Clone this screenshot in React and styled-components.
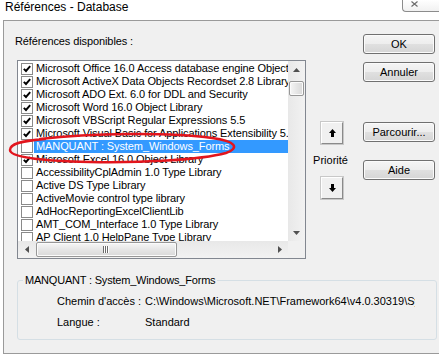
import React from "react";
import styled, { createGlobalStyle } from "styled-components";

const FONT = `"Liberation Sans", Arial, sans-serif`;

const GlobalStyle = createGlobalStyle`
  html, body { margin: 0; padding: 0; background: #fff; }
  body { font-family: ${FONT}; }
`;

const Window = styled.div`
  position: relative;
  width: 439px;
  height: 356px;
  overflow: hidden;
  background: #fff;
  font-family: ${FONT};
  font-size: 11px;
  color: #000;
`;

const TitleBar = styled.div`
  display: flex;
  justify-content: space-between;
  align-items: flex-start;
  height: 20px;
`;

const Title = styled.div`
  padding-left: 5px;
  font-size: 12px;
  line-height: 15px;
`;

const CloseButton = styled.div`
  box-sizing: border-box;
  width: 37px;
  height: 12px;
  border: 1px solid #8c8c8c;
  border-top: none;
  border-right: none;
  border-radius: 0 0 0 4px;
  background: linear-gradient(#ffffff, #f1f1f1);
  display: flex;
  align-items: flex-start;
  padding: 1px 0 0 8px;
`;

const DialogBody = styled.div`
  box-sizing: border-box;
  margin-left: 3px;
  width: 450px;
  height: 334px;
  border: 1px solid #9a9a9a;
  border-right: none;
  background: #f0f0f0;
  display: flex;
  flex-direction: column;
`;

const TopArea = styled.div`
  display: flex;
  align-items: flex-start;
  padding-top: 13px;
`;

const LeftColumn = styled.div`
  display: flex;
  flex-direction: column;
  margin-left: 11px;
`;

const FieldLabel = styled.div`
  line-height: 13px;
  margin: 1px 0 12px;
  letter-spacing: -0.1px;
`;

const ListBox = styled.div`
  box-sizing: border-box;
  margin-left: 2px;
  width: 289px;
  height: 199px;
  border: 1px solid #828790;
  background: #fff;
  display: grid;
  grid-template-columns: 270px 17px;
  grid-template-rows: 180px 17px;
`;

const Rows = styled.div`
  overflow: hidden;
  padding-top: 1px;
`;

const Row = styled.div`
  display: flex;
  align-items: center;
  height: 13px;
`;

const CheckBox = styled.div`
  box-sizing: border-box;
  flex: none;
  width: 12px;
  height: 12px;
  margin-left: 3px;
  border: 1px solid #8a8a8a;
  background: #fff;
  display: flex;
  align-items: center;
  justify-content: center;
`;

const ItemText = styled.div`
  flex: 1;
  min-width: 0;
  margin-left: 1px;
  padding: 0 2px;
  line-height: 13px;
  letter-spacing: -0.1px;
  white-space: nowrap;
  overflow: hidden;
  background: ${(p) => (p.$selected ? "#3399ff" : "transparent")};
  color: ${(p) => (p.$selected ? "#fff" : "#000")};
`;

const VScroll = styled.div`
  display: flex;
  flex-direction: column;
  background: linear-gradient(to right, #e8e8e8, #f2f2f2);
`;

const HScroll = styled.div`
  display: flex;
  align-items: center;
  background: linear-gradient(#e8e8e8, #f2f2f2);
`;

const Corner = styled.div`
  background: #f0f0f0;
`;

const ScrollArrow = styled.div`
  flex: none;
  width: 17px;
  height: 17px;
  display: flex;
  align-items: center;
  justify-content: center;
  margin-${(p) => p.$push || "none"}: auto;
`;

const Thumb = styled.div`
  box-sizing: border-box;
  flex: none;
  border: 1px solid #979797;
  border-radius: 2px;
  display: flex;
  align-items: center;
  justify-content: center;
  background: ${(p) =>
    p.$vertical
      ? "linear-gradient(to right, #f6f6f6, #e6e6e6 50%, #d9d9d9)"
      : "linear-gradient(#f6f6f6, #e6e6e6 50%, #d9d9d9)"};
  box-shadow: inset 0 0 0 1px #fbfbfb;
  ${(p) =>
    p.$vertical
      ? "width: 15px; height: 15px; margin: 3px 0 0 1px;"
      : "width: 141px; height: 15px; margin-left: 1px;"}
`;

const MidColumn = styled.div`
  display: flex;
  flex-direction: column;
  align-items: center;
  width: 42px;
  margin-left: 5px;
  padding-top: 88px;
`;

const ArrowButton = styled.div`
  box-sizing: border-box;
  width: 22px;
  height: 22px;
  border: 1px solid;
  border-color: #ffffff #8a8a8a #8a8a8a #ffffff;
  box-shadow: 0 0 0 1px #c8c8c8;
  background: #f0f0f0;
  display: flex;
  align-items: center;
  justify-content: center;
`;

const PriorityLabel = styled.div`
  line-height: 13px;
  margin: 10px 3px 10px 0;
`;

const RightColumn = styled.div`
  display: flex;
  flex-direction: column;
  margin-left: 10px;
  width: 72px;
`;

const Button = styled.div`
  box-sizing: border-box;
  height: 20px;
  margin-top: ${(p) => p.$gap || 0}px;
  border: 1px solid #707070;
  border-radius: 3px;
  background: linear-gradient(#f5f5f5 0%, #ededed 50%, #e0e0e0 51%, #d5d5d5 100%);
  box-shadow: inset 0 0 0 1px #fbfbfb;
  display: flex;
  align-items: center;
  justify-content: center;
  line-height: 13px;
`;

const GroupBox = styled.fieldset`
  box-sizing: border-box;
  width: 420px;
  min-width: 0;
  margin: 15px 0 0 13px;
  padding: 0;
  border: 1px solid #d5dfe5;
  border-radius: 3px;
`;

const Legend = styled.legend`
  margin-left: 5px;
  padding: 0 2px;
  line-height: 13px;
  letter-spacing: -0.2px;
`;

const InfoBlock = styled.div`
  display: flex;
  flex-direction: column;
  gap: 8px;
  padding: 8px 0 10px 39px;
`;

const InfoRow = styled.div`
  display: flex;
  line-height: 13px;
`;

const InfoLabel = styled.div`
  width: 88px;
  flex: none;
`;

const InfoValue = styled.div`
  width: 270px;
  white-space: nowrap;
  overflow: hidden;
`;

const Annotation = styled.svg`
  position: absolute;
  left: 0;
  top: 0;
  pointer-events: none;
`;

const items = [
  ["Microsoft Office 16.0 Access database engine Object Library", true],
  ["Microsoft ActiveX Data Objects Recordset 2.8 Library", true],
  ["Microsoft ADO Ext. 6.0 for DDL and Security", true],
  ["Microsoft Word 16.0 Object Library", true],
  ["Microsoft VBScript Regular Expressions 5.5", true],
  ["Microsoft Visual Basic for Applications Extensibility 5.3", true],
  ["MANQUANT : System_Windows_Forms", false, true],
  ["Microsoft Excel 16.0 Object Library", true],
  ["AccessibilityCplAdmin 1.0 Type Library", false],
  ["Active DS Type Library", false],
  ["ActiveMovie control type library", false],
  ["AdHocReportingExcelClientLib", false],
  ["AMT_COM_Interface 1.0 Type Library", false],
  ["AP Client 1.0 HelpPane Type Library", false],
];

const Check = () => (
  <svg width="8" height="8" viewBox="0 0 8 8">
    <path d="M0.8 3.8 L3 6 L7.2 1.2" fill="none" stroke="#000" strokeWidth="1.9" />
  </svg>
);

const Tri = ({ dir }) => {
  const pts = {
    up: "0,4 3.5,0 7,4",
    down: "0,0 7,0 3.5,4",
    left: "4,0 4,7 0,3.5",
    right: "0,0 4,3.5 0,7",
  }[dir];
  const horiz = dir === "left" || dir === "right";
  return (
    <svg width={horiz ? 4 : 7} height={horiz ? 7 : 4} viewBox={horiz ? "0 0 4 7" : "0 0 7 4"}>
      <polygon points={pts} fill="#505050" />
    </svg>
  );
};

const Grip = () => (
  <svg width="7" height="7" viewBox="0 0 7 7">
    {[0, 2, 4].map((i) => (
      <g key={i}>
        <rect x={i} y="0" width="1" height="7" fill="#6b6b6b" />
        <rect x={i + 1} y="0" width="1" height="7" fill="#fff" />
      </g>
    ))}
  </svg>
);

const BigArrow = ({ down }) => (
  <svg width="7" height="8" viewBox="0 0 7 8" style={down ? { transform: "rotate(180deg)" } : undefined}>
    <path d="M3.5 0 L7 4 L5 4 L5 8 L2 8 L2 4 L0 4 Z" fill="#000" />
  </svg>
);

export default function App() {
  return (
    <Window>
      <GlobalStyle />
      <TitleBar>
        <Title>Références - Database</Title>
        <CloseButton>
          <svg width="7" height="6" viewBox="0 0 7 6">
            <path d="M0.5 0.5 L6.5 5.5 M6.5 0.5 L0.5 5.5" stroke="#6a6a6a" strokeWidth="1.1" fill="none" />
          </svg>
        </CloseButton>
      </TitleBar>
      <DialogBody>
        <TopArea>
          <LeftColumn>
            <FieldLabel>Références disponibles :</FieldLabel>
            <ListBox>
              <Rows>
                {items.map(([name, checked, selected]) => (
                  <Row key={name}>
                    <CheckBox>{checked && <Check />}</CheckBox>
                    <ItemText $selected={selected}>{name}</ItemText>
                  </Row>
                ))}
              </Rows>
              <VScroll>
                <ScrollArrow><Tri dir="up" /></ScrollArrow>
                <Thumb $vertical />
                <ScrollArrow $push="top"><Tri dir="down" /></ScrollArrow>
              </VScroll>
              <HScroll>
                <ScrollArrow><Tri dir="left" /></ScrollArrow>
                <Thumb><Grip /></Thumb>
                <ScrollArrow $push="left"><Tri dir="right" /></ScrollArrow>
              </HScroll>
              <Corner />
            </ListBox>
          </LeftColumn>
          <MidColumn>
            <ArrowButton><BigArrow /></ArrowButton>
            <PriorityLabel>Priorité</PriorityLabel>
            <ArrowButton><BigArrow down /></ArrowButton>
          </MidColumn>
          <RightColumn>
            <Button>OK</Button>
            <Button $gap={8}>Annuler</Button>
            <Button $gap={40}>Parcourir...</Button>
            <Button $gap={18}>Aide</Button>
          </RightColumn>
        </TopArea>
        <GroupBox>
          <Legend>MANQUANT : System_Windows_Forms</Legend>
          <InfoBlock>
            <InfoRow>
              <InfoLabel>Chemin d'accès :</InfoLabel>
              <InfoValue>C:\Windows\Microsoft.NET\Framework64\v4.0.30319\System.Windows.Forms.tlb</InfoValue>
            </InfoRow>
            <InfoRow>
              <InfoLabel>Langue :</InfoLabel>
              <InfoValue>Standard</InfoValue>
            </InfoRow>
          </InfoBlock>
        </GroupBox>
      </DialogBody>
      <Annotation width="439" height="356" viewBox="0 0 439 356">
        <path
          d="M40 139 C90 133, 170 132, 212 138 C236 141, 240 148, 226 153 C200 160, 140 163, 90 162 C40 161, 10 157, 10 150 C10 144, 20 141, 45 139"
          fill="none"
          stroke="#e2151d"
          strokeWidth="2.5"
          strokeLinecap="round"
        />
      </Annotation>
    </Window>
  );
}
